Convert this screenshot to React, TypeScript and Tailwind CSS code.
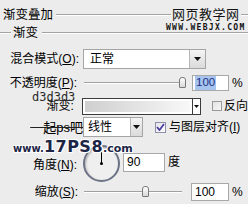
import React from 'react'

const Line = ({ className = '' }: { className?: string }) => (
  <div className={`h-[2px] border-t border-[#a3a3a3] border-b border-b-white ${className}`} />
)

const Arrow = () => (
  <svg width="7" height="4" viewBox="0 0 7 4">
    <path d="M0 0h7L3.5 4z" fill="#111" />
  </svg>
)

const Slider = ({ pos }: { pos: number }) => (
  <div className="relative w-[98px] h-[14px] ml-[4px] flex items-center">
    <div className="w-full h-[2px] border-t border-[#a0a0a0] border-b border-b-white" />
    <div
      className="absolute top-[1px] w-[7px] h-[11px] rounded-t-[3px] rounded-b-[1px] border border-[#7a7a7a] bg-gradient-to-b from-white to-[#d8d8d8]"
      style={{ left: pos }}
    />
  </div>
)

export default function App() {
  return (
    <div className="relative w-[248px] h-[204px] overflow-hidden bg-[#ececec] text-[12px] leading-none text-black font-['Liberation_Sans','Noto_Sans_CJK_SC',sans-serif]">
      {/* title */}
      <div className="flex items-center h-[20px] mt-[5px] pl-[3px]">
        <span className="text-[12.5px]">渐变叠加</span>
        <Line className="flex-1 ml-[3px]" />
      </div>

      {/* group */}
      <div className="flex items-center h-[16px]">
        <Line className="w-[11px]" />
        <span className="px-[2px] text-[12.5px]">渐变</span>
        <Line className="flex-1 ml-[2px]" />
      </div>

      {/* blend mode */}
      <div className="flex items-center h-[20px] mt-[8px]">
        <div className="w-[80px] text-right pr-[1px]">
          混合模式(<u>O</u>):
        </div>
        <div className="ml-[3px] w-[123px] h-[20px] flex items-center bg-white border border-[#a5a5a5]">
          <span className="flex-1 pl-[6px]">正常</span>
          <div className="w-[16px] h-[18px] flex items-center justify-center bg-gradient-to-b from-[#f4f4f4] to-[#dadada] border-l border-[#b5b5b5]">
            <Arrow />
          </div>
        </div>
      </div>

      {/* opacity */}
      <div className="flex items-center h-[16px] mt-[6px]">
        <div className="w-[80px] text-right pr-[3px]">
          不透明度(<u>P</u>):
        </div>
        <Slider pos={95} />
        <div className="ml-[10px] w-[37px] h-[16px] flex items-center bg-white border border-[#a8a8a8]">
          <span className="ml-[2px] px-[1px] py-[1px] bg-[#a6c4ee] text-[#1d2f85] text-[11.5px]">100</span>
        </div>
        <span className="ml-[3px] text-[12px]">%</span>
      </div>

      {/* gradient */}
      <div className="flex items-center h-[18px] mt-[6px]">
        <div className="w-[80px] text-right pr-[5px]">渐变:</div>
        <div className="ml-[3px] w-[121px] h-[17px] flex border border-[#3c3c3c] bg-white">
          <div className="flex-1 m-[2px] bg-gradient-to-r from-[#cfcfcf] to-[#f8f8f8]" />
          <div className="w-[8px] flex items-center justify-center border-l border-[#3c3c3c]">
            <svg width="5" height="3" viewBox="0 0 5 3">
              <path d="M0 0h5L2.5 3z" fill="#111" />
            </svg>
          </div>
        </div>
        <div className="ml-[11px] w-[10px] h-[10px] border border-[#9a9a9a] bg-gradient-to-br from-[#e2e2e2] to-[#f8f8f8]" />
        <span className="ml-[2px] whitespace-nowrap">反向</span>
      </div>

      {/* style */}
      <div className="flex items-center h-[20px] mt-[2px]">
        <div className="w-[83px] text-right line-through decoration-[#222] text-[13px]">一起ps吧</div>
        <div className="w-[60px] h-[20px] flex items-center bg-white border border-[#a5a5a5]">
          <span className="flex-1 pl-[4px]">线性</span>
          <div className="w-[12px] h-[18px] flex items-center justify-center bg-gradient-to-b from-[#f4f4f4] to-[#dadada] border-l border-[#b5b5b5]">
            <Arrow />
          </div>
        </div>
        <div className="ml-[12px] w-[11px] h-[11px] flex items-center justify-center border border-[#8f8fa8] bg-gradient-to-br from-[#e4e4ec] to-white">
          <svg width="9" height="8" viewBox="0 0 9 8">
            <path d="M1 4l2.5 3L8 1" fill="none" stroke="#4a3fa0" strokeWidth="1.8" />
          </svg>
        </div>
        <span className="ml-[3px] whitespace-nowrap">
          与图层对齐(<u>I</u>)
        </span>
      </div>

      {/* angle */}
      <div className="flex items-center h-[38px] mt-[6px]">
        <div className="w-[80px] text-right pr-[3px] pt-[6px]">
          角度(<u>N</u>):
        </div>
        <div className="ml-[3px] mt-[2px] w-[37px] h-[37px] rounded-full border-2 border-[#6d7386] bg-[#efefef] shadow-[inset_1px_1px_2px_rgba(0,0,0,0.25)] flex items-start justify-center relative">
          <div className="w-[1px] h-[16px] bg-black" />
          <div className="absolute top-[15px] left-[15px] w-[3px] h-[3px] rounded-full bg-black" />
        </div>
        <div className="ml-[3px] w-[42px] h-[19px] flex items-center pl-[3px] bg-white border border-[#a8a8a8] text-[12px]">90</div>
        <span className="ml-[3px]">度</span>
      </div>

      {/* scale */}
      <div className="flex items-center h-[18px] mt-[2px]">
        <div className="w-[80px] text-right pr-[2px]">
          缩放(<u>S</u>):
        </div>
        <Slider pos={58} />
        <div className="ml-[9px] w-[38px] h-[18px] flex items-center pl-[3px] bg-white border border-[#a8a8a8] text-[12px]">100</div>
        <span className="ml-[3px]">%</span>
      </div>

      {/* watermarks */}
      <div className="absolute left-[171px] top-[8px] px-[1px] bg-[#ececec] text-[13px] text-[#111] tracking-[0.5px]">网页教学网</div>
      <div className="absolute left-[166px] top-[24px] text-[8px] font-bold tracking-[1.3px] text-[#111] font-['DejaVu_Sans_Mono',monospace]">WWW.WEBJX.COM</div>
      <div className="absolute left-[32px] top-[91px] text-[12px] text-[#2a2a2a] font-['DejaVu_Sans_Mono',monospace]">d3d3d3</div>
      <div className="absolute left-[13px] top-[139px] font-black text-[#1c2546] font-['DejaVu_Sans',sans-serif] [text-shadow:1px_1px_0_#fff,-1px_-1px_0_#fff,1px_-1px_0_#fff,-1px_1px_0_#fff]">
        <span className="text-[10px]">www.</span>
        <span className="text-[16px] tracking-[0.5px]">17PS8</span>
        <span className="text-[11px]">.com</span>
      </div>
    </div>
  )
}
